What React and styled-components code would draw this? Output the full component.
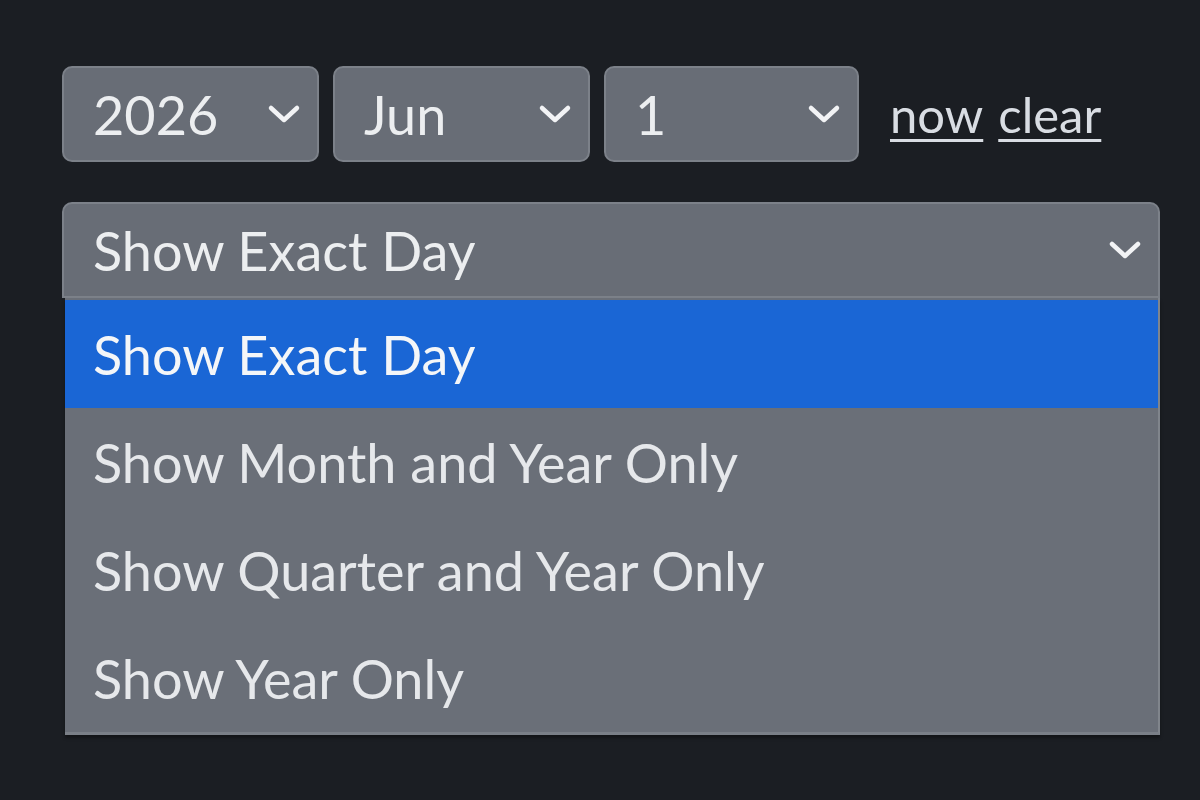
import React from "react";
import styled, { createGlobalStyle } from "styled-components";

const Global = createGlobalStyle`
  html, body { margin: 0; padding: 0; background: #1b1e23; }
  body { font-family: Lato, "Open Sans", sans-serif; color: #e4e6ea; }
`;

const Page = styled.div`
  width: 1200px;
  height: 800px;
  box-sizing: border-box;
  padding: 66px 40px 0 62px;
  display: flex;
  flex-direction: column;
  gap: 40px;
`;

const Row = styled.div`
  display: flex;
  align-items: center;
  gap: 14px;
`;

const SelectBox = styled.div`
  position: relative;
  box-sizing: border-box;
  width: ${(p) => p.$w}px;
  height: 96px;
  display: flex;
  align-items: center;
  justify-content: space-between;
  padding: 0 16px 0 29px;
  background: #686d76;
  border: 2px solid #7c8189;
  border-radius: ${(p) => (p.$open ? "10px 10px 0 0" : "10px")};
  font-size: 54px;
  color: #eceef0;
  line-height: 1;
`;

const Label = styled.span`
  display: block;
  padding-top: 2px;
`;

const Links = styled.div`
  display: flex;
  gap: 15px;
  margin-left: 17px;
`;

const Link = styled.a`
  font-size: 49px;
  color: #d9dde3;
  text-decoration: underline;
  text-decoration-thickness: 3px;
  text-underline-offset: 6px;
  cursor: pointer;
`;

const Wrap = styled.div`
  position: relative;
  width: 1098px;
`;

const Menu = styled.ul`
  position: absolute;
  top: 96px;
  left: 3px;
  right: 0;
  margin: 0;
  padding: 2px 0 0;
  list-style: none;
  background: #6a6f78;
  border-right: 2px solid #80858c;
  border-bottom: 3px solid #7a7f87;
  box-shadow: 0 3px 3px rgba(0, 0, 0, 0.35);
`;

const Option = styled.li`
  height: 108px;
  display: flex;
  align-items: center;
  padding-left: 28px;
  font-size: 54px;
  color: ${(p) => (p.$active ? "#f4f6f8" : "#e6e8eb")};
  background: ${(p) => (p.$active ? "#1a66d5" : "transparent")};
`;

const Chevron = () => (
  <svg width="34" height="20" viewBox="0 0 34 20" fill="none">
    <polyline
      points="4,4 17,16 30,4"
      stroke="#f2f3f5"
      strokeWidth="4.5"
      strokeLinecap="round"
      strokeLinejoin="round"
    />
  </svg>
);

const Select = ({ w, value, open }) => (
  <SelectBox $w={w} $open={open}>
    <Label>{value}</Label>
    <Chevron />
  </SelectBox>
);

const options = [
  "Show Exact Day",
  "Show Month and Year Only",
  "Show Quarter and Year Only",
  "Show Year Only",
];

export default function App() {
  return (
    <>
      <Global />
      <Page>
        <Row>
          <Select w={257} value="2026" />
          <Select w={257} value="Jun" />
          <Select w={255} value="1" />
          <Links>
            <Link>now</Link>
            <Link>clear</Link>
          </Links>
        </Row>
        <Wrap>
          <Select w={1098} value="Show Exact Day" open />
          <Menu>
            {options.map((o, i) => (
              <Option key={o} $active={i === 0}>
                {o}
              </Option>
            ))}
          </Menu>
        </Wrap>
      </Page>
    </>
  );
}
